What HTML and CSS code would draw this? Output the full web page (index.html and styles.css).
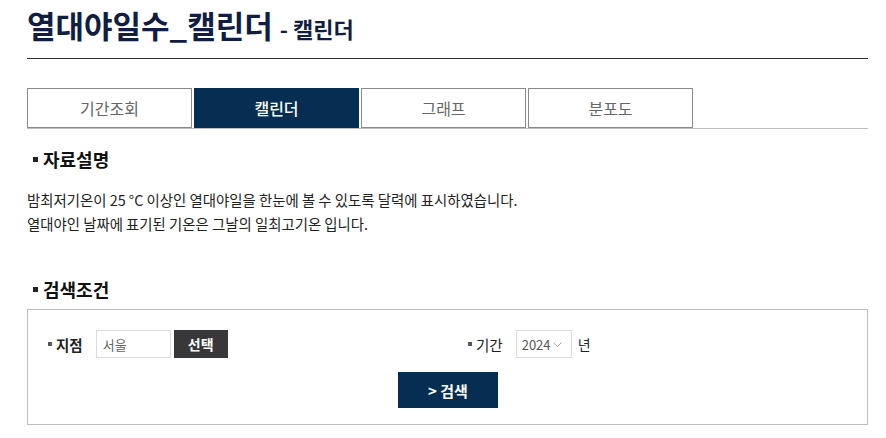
FILE: index.html
```html
<html>
<head>
  <meta charset="UTF-8">
  <meta name="viewport" content="width=device-width, initial-scale=1.0">
  <title>열대야일수_캘린더</title>
  <link rel="stylesheet" href="styles.css">
</head>
<body>
  <div class="page">
    <h1 class="page-title">열대야일수_캘린더 <span class="sub">- 캘린더</span></h1>

    <ul class="tabs">
      <li class="tab">기간조회</li>
      <li class="tab active">캘린더</li>
      <li class="tab">그래프</li>
      <li class="tab">분포도</li>
    </ul>

    <h3 class="section-title">자료설명</h3>
    <p class="desc">
      밤최저기온이 25 °C 이상인 열대야일을 한눈에 볼 수 있도록 달력에 표시하였습니다.<br>
      열대야인 날짜에 표기된 기온은 그날의 일최고기온 입니다.
    </p>

    <h3 class="section-title search-title">검색조건</h3>
    <form class="search-box">
      <div class="search-row">
        <div class="field field-station">
          <span class="label label-strong">지점</span>
          <input type="text" class="input" placeholder="서울">
          <button type="button" class="btn-select">선택</button>
        </div>
        <div class="field field-period">
          <span class="label">기간</span>
          <div class="select">2024
            <svg width="9" height="5" viewBox="0 0 9 5"><path d="M0.5 0.5 L4.5 4.5 L8.5 0.5" fill="none" stroke="#aaa" stroke-width="1"/></svg>
          </div>
          <span class="unit">년</span>
        </div>
      </div>
      <button type="button" class="btn-search">&gt; 검색</button>
    </form>
  </div>
</body>
</html>
```

FILE: styles.css
```css
:root {
  --navy: #062d52;
  --title: #111d43;
  --text: #222;
  --border: #bdbdbd;
}

* {
  margin: 0;
  padding: 0;
  box-sizing: border-box;
  font-family: 'Noto Sans CJK KR', 'Noto Sans', sans-serif;
}

body {
  background: #fff;
  color: var(--text);
}

.page {
  padding: 0 18px 0 27px;
}

.page-title {
  font-size: 31px;
  font-weight: 700;
  color: var(--title);
  line-height: 40px;
  padding-top: 5px;
  padding-bottom: 10px;
  border-bottom: 1px solid #333;
}

.page-title .sub {
  font-size: 22px;
}

.tabs {
  list-style: none;
  display: flex;
  gap: 2px;
  margin-top: 29px;
  border-bottom: 1px solid var(--border);
}

.tab {
  width: 165px;
  height: 40px;
  border: 1px solid #8a8a8a;
  display: flex;
  align-items: center;
  justify-content: center;
  font-size: 16px;
  color: #666;
}

.tab.active {
  background: var(--navy);
  border-color: var(--navy);
  color: #fff;
  font-weight: 500;
}

.section-title {
  font-size: 18px;
  font-weight: 700;
  color: #111;
  margin: 18px 0 0 6px;
  line-height: 24px;
  display: flex;
  align-items: center;
}

.section-title::before {
  content: '';
  width: 5px;
  height: 5px;
  background: #222;
  margin-right: 5px;
}

.desc {
  font-size: 14.4px;
  line-height: 24px;
  margin-top: 17px;
}

.search-title {
  margin-top: 41px;
}

.search-box {
  margin-top: 8px;
  border: 1px solid var(--border);
  height: 116px;
  padding: 20px 0 0 20px;
}

.search-row {
  display: flex;
  align-items: center;
  height: 28px;
}

.field {
  display: flex;
  align-items: center;
}

.field-station {
  width: 420px;
}

.label {
  display: flex;
  align-items: center;
  font-size: 14.5px;
  color: #222;
  margin-right: 13px;
}

.label::before {
  content: '';
  width: 4px;
  height: 4px;
  background: #555;
  margin-right: 4px;
}

.label-strong {
  font-weight: 700;
}

.input {
  width: 75px;
  height: 28px;
  border: 1px solid #dcdcdc;
  padding: 0 6px;
  font-size: 13px;
  color: #555;
  outline: none;
}

.input::placeholder {
  color: #666;
}

.btn-select {
  width: 54px;
  height: 28px;
  margin-left: 3px;
  border: none;
  background: #38383a;
  color: #fff;
  font-size: 14px;
  font-weight: 700;
}

.select {
  width: 56px;
  height: 28px;
  border: 1px solid #dcdcdc;
  display: flex;
  align-items: center;
  padding-left: 5px;
  font-size: 13px;
  color: #555;
  gap: 2px;
}

.unit {
  font-size: 14px;
  margin-left: 6px;
}

.btn-search {
  display: block;
  width: 100px;
  height: 36px;
  margin: 14px 0 0 350px;
  border: none;
  background: var(--navy);
  color: #fff;
  font-size: 15px;
  font-weight: 700;
}
```
